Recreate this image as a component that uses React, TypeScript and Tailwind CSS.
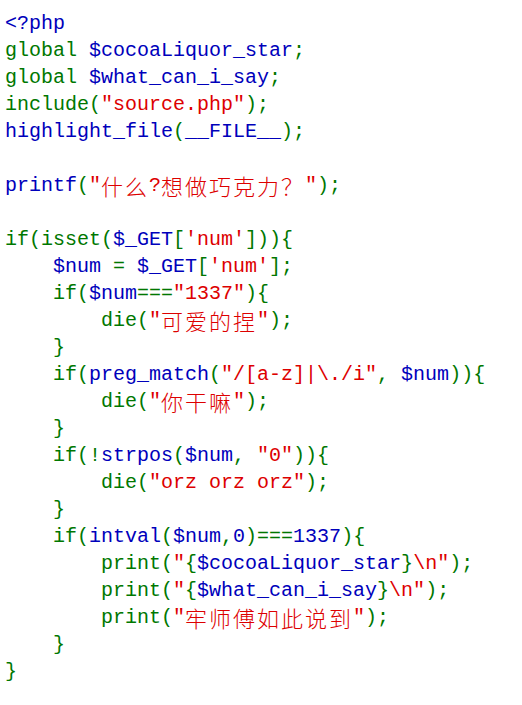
type Tok = [string, string];

const B = "text-[#0000BB]";
const G = "text-[#007700]";
const R = "text-[#DD0000]";

const lines: Tok[][] = [
  [[B, "<?php"]],
  [[G, "global "], [B, "$cocoaLiquor_star"], [G, ";"]],
  [[G, "global "], [B, "$what_can_i_say"], [G, ";"]],
  [[G, "include("], [R, '"source.php"'], [G, ");"]],
  [[B, "highlight_file"], [G, "("], [B, "__FILE__"], [G, ");"]],
  [],
  [[B, "printf"], [G, "("], [R, '"什么?想做巧克力？"'], [G, ");"]],
  [],
  [[G, "if(isset("], [B, "$_GET"], [G, "["], [R, "'num'"], [G, "])){"]],
  [[B, "    $num "], [G, "= "], [B, "$_GET"], [G, "["], [R, "'num'"], [G, "];"]],
  [[G, "    if("], [B, "$num"], [G, "==="], [R, '"1337"'], [G, "){"]],
  [[G, "        die("], [R, '"可爱的捏"'], [G, ");"]],
  [[G, "    }"]],
  [[G, "    if("], [B, "preg_match"], [G, "("], [R, '"/[a-z]|\\./i"'], [G, ", "], [B, "$num"], [G, ")){"]],
  [[G, "        die("], [R, '"你干嘛"'], [G, ");"]],
  [[G, "    }"]],
  [[G, "    if(!"], [B, "strpos"], [G, "("], [B, "$num"], [G, ", "], [R, '"0"'], [G, ")){"]],
  [[G, "        die("], [R, '"orz orz orz"'], [G, ");"]],
  [[G, "    }"]],
  [[G, "    if("], [B, "intval"], [G, "("], [B, "$num"], [G, ","], [B, "0"], [G, ")==="], [B, "1337"], [G, "){"]],
  [[G, "        print("], [R, '"'], [G, "{"], [B, "$cocoaLiquor_star"], [G, "}"], [R, '\\n"'], [G, ");"]],
  [[G, "        print("], [R, '"'], [G, "{"], [B, "$what_can_i_say"], [G, "}"], [R, '\\n"'], [G, ");"]],
  [[G, "        print("], [R, '"牢师傅如此说到"'], [G, ");"]],
  [[G, "    }"]],
  [[G, "}"]],
];

const cjk = /([\u3000-\u9fff\uff00-\uffef]+)/;

function Piece({ text }: { text: string }) {
  const parts = text.split(cjk);
  return (
    <>
      {parts.map((p, i) =>
        cjk.test(p) ? (
          <span
            key={i}
            className="inline-block h-[27px] align-top font-['Noto_Sans_CJK_SC',sans-serif] text-[22px] font-light tracking-[2px] leading-[27px]"
          >
            {p}
          </span>
        ) : (
          <span key={i}>{p}</span>
        )
      )}
    </>
  );
}

export default function App() {
  return (
    <div className="min-h-screen bg-white pt-[10px] pl-[5px] font-['Liberation_Mono',monospace] text-[20px] leading-[27px]">
      {lines.map((line, i) => (
        <div key={i} className="h-[27px] whitespace-pre">
          {line.map(([c, t], j) => (
            <span key={j} className={c}>
              <Piece text={t} />
            </span>
          ))}
        </div>
      ))}
    </div>
  );
}
